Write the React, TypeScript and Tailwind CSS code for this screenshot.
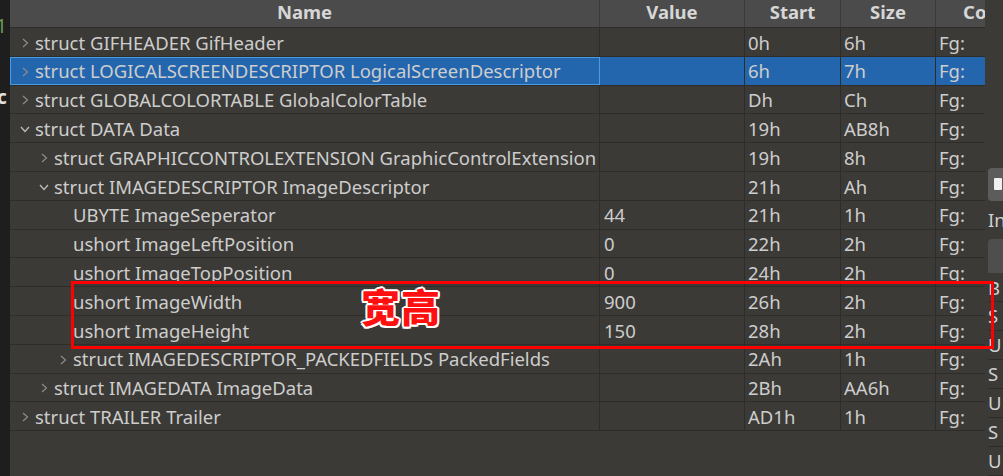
import React from "react";

type Row = {
  depth: number;
  arrow: "right" | "down" | "none";
  name: string;
  value?: string;
  start: string;
  size: string;
  selected?: boolean;
};

const rows: Row[] = [
  { depth: 0, arrow: "right", name: "struct GIFHEADER GifHeader", start: "0h", size: "6h" },
  { depth: 0, arrow: "right", name: "struct LOGICALSCREENDESCRIPTOR LogicalScreenDescriptor", start: "6h", size: "7h", selected: true },
  { depth: 0, arrow: "right", name: "struct GLOBALCOLORTABLE GlobalColorTable", start: "Dh", size: "Ch" },
  { depth: 0, arrow: "down", name: "struct DATA Data", start: "19h", size: "AB8h" },
  { depth: 1, arrow: "right", name: "struct GRAPHICCONTROLEXTENSION GraphicControlExtension", start: "19h", size: "8h" },
  { depth: 1, arrow: "down", name: "struct IMAGEDESCRIPTOR ImageDescriptor", start: "21h", size: "Ah" },
  { depth: 2, arrow: "none", name: "UBYTE ImageSeperator", value: "44", start: "21h", size: "1h" },
  { depth: 2, arrow: "none", name: "ushort ImageLeftPosition", value: "0", start: "22h", size: "2h" },
  { depth: 2, arrow: "none", name: "ushort ImageTopPosition", value: "0", start: "24h", size: "2h" },
  { depth: 2, arrow: "none", name: "ushort ImageWidth", value: "900", start: "26h", size: "2h" },
  { depth: 2, arrow: "none", name: "ushort ImageHeight", value: "150", start: "28h", size: "2h" },
  { depth: 2, arrow: "right", name: "struct IMAGEDESCRIPTOR_PACKEDFIELDS PackedFields", start: "2Ah", size: "1h" },
  { depth: 1, arrow: "right", name: "struct IMAGEDATA ImageData", start: "2Bh", size: "AA6h" },
  { depth: 0, arrow: "right", name: "struct TRAILER Trailer", start: "AD1h", size: "1h" },
];

const indentClass = ["pl-[9px]", "pl-[28px]", "pl-[47px]"];

function Chevron({ dir }: { dir: "right" | "down" }) {
  return (
    <svg width="12" height="12" viewBox="0 0 12 12" className="shrink-0">
      {dir === "right" ? (
        <path d="M4 2 L8.5 6 L4 10" fill="none" stroke="#8c8c8c" strokeWidth="1.2" />
      ) : (
        <path d="M2 4 L6 8.5 L10 4" fill="none" stroke="#bdbdbd" strokeWidth="1.3" />
      )}
    </svg>
  );
}

function TableRow({ r }: { r: Row }) {
  const bg = r.selected ? "bg-[#2466ad]" : "bg-[#3c3a36]";
  return (
    <div className={`grid grid-cols-[590px_145px_96px_95px_49px] h-[28.8px] border-b border-[#2e2d2a] leading-none ${bg}`}>
      <div
        className={`flex items-center pt-[2px] ${indentClass[r.depth]} border-r border-[#2e2d2a] overflow-hidden whitespace-nowrap ${
          r.selected ? "outline outline-1 -outline-offset-1 outline-[#4a9be6]" : ""
        }`}
      >
        <div className="w-[16px] flex items-center">
          {r.arrow !== "none" && <Chevron dir={r.arrow} />}
        </div>
        <span>{r.name}</span>
      </div>
      <div className="flex items-center pt-[2px] pl-[4px] border-r border-[#2e2d2a]">{r.value ?? ""}</div>
      <div className="flex items-center pt-[2px] pl-[3px] border-r border-[#2e2d2a]">{r.start}</div>
      <div className="flex items-center pt-[2px] pl-[3px] border-r border-[#2e2d2a]">{r.size}</div>
      <div className="flex items-center pt-[2px] pl-[3px] overflow-hidden whitespace-nowrap">Fg:</div>
    </div>
  );
}

export default function App() {
  return (
    <div
      className="relative w-[1003px] h-[476px] overflow-hidden flex bg-[#3c3a36] text-[#cdcdcd] text-[18.5px]"
      style={{ fontFamily: '"Noto Sans", "Open Sans", sans-serif' }}
    >
      {/* left editor strip */}
      <div className="w-[10px] shrink-0 bg-[#1e1e1e] relative overflow-hidden">
        <div className="absolute left-[-4px] top-[17px] text-[#6a9a55] text-[19px] leading-none">1</div>
        <div className="absolute left-[-3px] top-[88px] text-[#e0e0e0] text-[19px] font-bold leading-none">c</div>
      </div>

      {/* table */}
      <div className="w-[975px] shrink-0 flex flex-col">
        <div className="grid grid-cols-[590px_145px_96px_95px_49px] h-[28px] bg-[#4b4b4b] border-b border-[#2e2d2a] font-bold text-[#d6d6d6] leading-none">
          <div className="flex items-center justify-center pb-[3px] border-r border-[#3a3a3a]">Name</div>
          <div className="flex items-center justify-center pb-[3px] border-r border-[#3a3a3a]">Value</div>
          <div className="flex items-center justify-center pb-[3px] border-r border-[#3a3a3a]">Start</div>
          <div className="flex items-center justify-center pb-[3px] border-r border-[#3a3a3a]">Size</div>
          <div className="flex items-center pb-[3px] pl-[27px] overflow-hidden whitespace-nowrap">Color</div>
        </div>
        {rows.map((r, i) => (
          <TableRow key={i} r={r} />
        ))}
      </div>

      {/* right side panel */}
      <div className="flex-1 bg-[#3b3a37] pl-[3px] flex flex-col overflow-hidden">
        <div className="h-[168px]" />
        <div className="h-[33px] w-[30px] rounded-[4px] bg-[#5c5c5c] flex items-center pl-[6px]">
          <div className="w-[8px] h-[12px] bg-[#f0f0f0] rounded-[1px]" />
        </div>
        <div className="h-[38px] flex items-center text-[#d0d0d0] whitespace-nowrap">In</div>
        <div className="h-[35px] w-[30px] rounded-t-[4px] bg-[#4e4e4e]" />
        {["B", "S", "U", "S", "U", "S", "U"].map((c, i) => (
          <div key={i} className="h-[29px] flex items-center border-b border-[#2e2d2a] text-[#d0d0d0] whitespace-nowrap">
            {c}
          </div>
        ))}
      </div>

      {/* annotation overlay */}
      <div className="absolute left-[71px] top-[281px] w-[923px] h-[68px] border-[3px] border-[#ff0000] pointer-events-none" />
      <div
        className="absolute left-[361px] top-[286px] text-[39px] font-black text-[#ff1010] leading-none tracking-[1px]"
        style={{
          fontFamily: '"Noto Sans CJK SC", sans-serif',
          textShadow:
            "2px 0 0 #fff, -2px 0 0 #fff, 0 2px 0 #fff, 0 -2px 0 #fff, 1.5px 1.5px 0 #fff, -1.5px -1.5px 0 #fff, 1.5px -1.5px 0 #fff, -1.5px 1.5px 0 #fff",
        }}
      >
        宽高
      </div>
    </div>
  );
}
